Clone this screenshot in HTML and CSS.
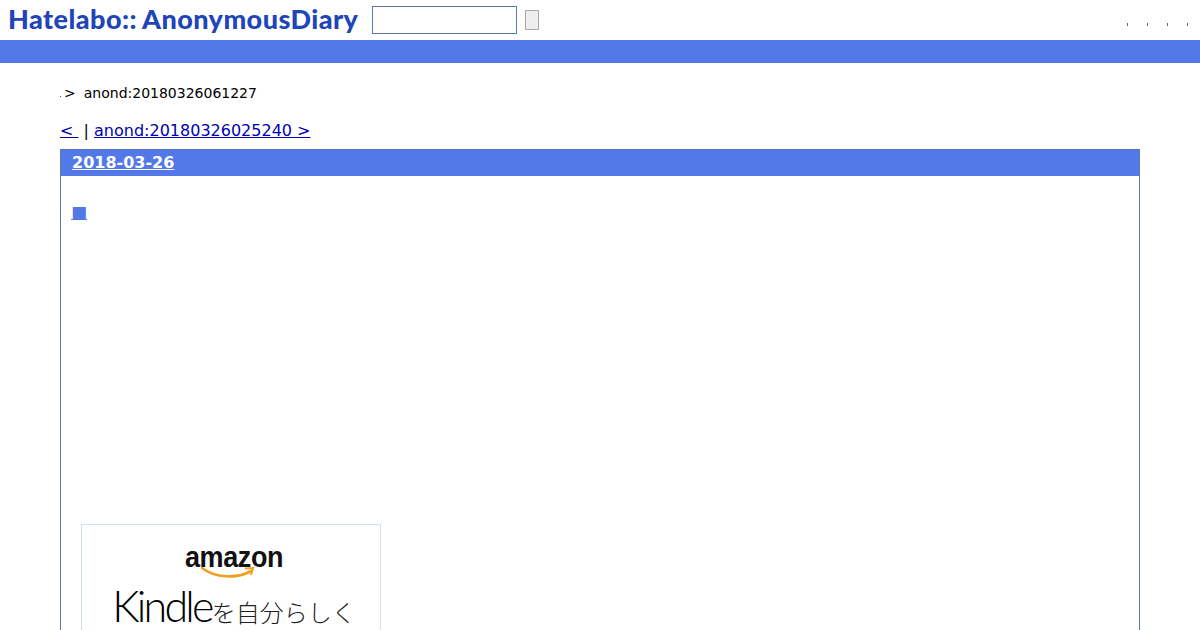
FILE: index.html
```html
<!DOCTYPE html>
<html lang="en">
<head>
    <meta charset="UTF-8">
    <meta name="viewport" content="width=device-width, initial-scale=1.0">
    <title>anond:20180326061227</title>
    <link rel="stylesheet" href="styles.css">
</head>
<body>
    <div class="header">
        <a class="logo" href="#">Hatelabo::<span class="logo-name">AnonymousDiary</span></a>
        <form class="search">
            <input class="search-input" type="text">
            <button class="search-button" type="button"></button>
        </form>
        <div class="header-links">
            <span class="dot"></span>
            <span class="dot"></span>
            <span class="dot"></span>
            <span class="dot"></span>
        </div>
    </div>
    <div class="band"></div>

    <div class="breadcrumb">
        <span class="crumb-dot"></span>
        <span class="crumb-arrow">&gt;</span>
        <span>anond:20180326061227</span>
    </div>

    <div class="pager">
        <a href="#">&lt;&nbsp;</a> | <a href="#">anond:20180326025240 &gt;</a>
    </div>

    <div class="day">
        <h2 class="day-title"><a href="#">2018-03-26</a></h2>
        <div class="day-body">
            <h3 class="entry-title"><a href="#">■</a></h3>
            <div class="banner">
                <div class="banner-brand">amazon</div>
                <svg class="banner-smile" width="54" height="13" viewBox="0 0 54 13">
                    <path d="M1 2C14 12 36 13 50 5" fill="none" stroke="#f0a01e" stroke-width="2.6" stroke-linecap="round"/>
                    <path d="M44 2.5L52 2L50 9" fill="none" stroke="#f0a01e" stroke-width="2"/>
                </svg>
                <div class="banner-copy"><span class="banner-kindle">Kindle</span>を自分らしく</div>
            </div>
        </div>
    </div>
</body>
</html>
```

FILE: styles.css
```css
body {
    font-family: "DejaVu Sans", sans-serif;
    background-color: #fff;
    color: #000;
    margin: 0;
    padding: 0;
    height: 630px;
    overflow: hidden;
}
a {
    color: #0000b0;
}
.header {
    display: flex;
    align-items: flex-start;
    height: 40px;
    padding-left: 8px;
}
.logo {
    width: 350px;
    font-family: Lato, sans-serif;
    font-weight: 900;
    font-size: 27px;
    line-height: 38px;
    letter-spacing: 0.45px;
    color: #2045b8;
    text-decoration: none;
    white-space: nowrap;
}
.logo-name {
    margin-left: 5px;
}
.search {
    display: flex;
    align-items: center;
    height: 40px;
    margin-left: 14px;
}
.search-input {
    width: 145px;
    height: 28px;
    padding: 0;
    border: 1px solid #5f7ba5;
    box-sizing: border-box;
    background-color: #fff;
}
.search-button {
    width: 14px;
    height: 20px;
    margin-left: 8px;
    padding: 0;
    border: 1px solid #aaa;
    background-color: #eee;
}
.header-links {
    display: flex;
    gap: 19px;
    margin-left: auto;
    padding-right: 12px;
    padding-top: 23px;
}
.dot {
    width: 1px;
    height: 3px;
    background-color: #666;
}
.band {
    height: 23px;
    background-color: #5279e7;
}
.breadcrumb {
    display: flex;
    align-items: center;
    height: 20px;
    margin: 20px 60px 0;
    font-size: 14px;
}
.crumb-dot {
    width: 1px;
    height: 1px;
    margin-top: 7px;
    background-color: #555;
}
.crumb-arrow {
    margin-left: 3px;
    margin-right: 8px;
}
.pager {
    height: 20px;
    margin: 18px 60px 0;
    font-size: 16px;
    line-height: 20px;
}
.day {
    margin: 8px 60px 0;
    border: 1px solid #5a76b8;
    border-bottom: none;
}
.day-title {
    margin: 0;
    padding-left: 11px;
    height: 26px;
    background-color: #5279e7;
    font-size: 16px;
    line-height: 26px;
}
.day-title a {
    color: #fff;
}
.day-body {
    padding: 0 20px;
}
.entry-title {
    margin: 25px 0 0 -10px;
    height: 323px;
    font-size: 17px;
    font-weight: normal;
    line-height: 22px;
}
.entry-title a {
    color: #5279e7;
}
.banner {
    display: flex;
    flex-direction: column;
    align-items: center;
    width: 298px;
    height: 250px;
    border: 1px solid #cfe0e8;
    padding-top: 19px;
}
.banner-brand {
    margin-left: 6px;
    font-family: "Liberation Sans", sans-serif;
    font-weight: 700;
    font-size: 27px;
    line-height: 26px;
    letter-spacing: -0.4px;
    transform: scaleY(1.08);
    color: #111;
}
.banner-smile {
    margin-left: -6px;
    margin-top: -4px;
}
.banner-copy {
    margin-left: 6px;
    margin-top: 7px;
    font-family: "Noto Sans CJK JP", sans-serif;
    font-weight: 300;
    font-size: 24px;
    line-height: 40px;
    color: #222;
    white-space: nowrap;
}
.banner-kindle {
    font-family: Lato, sans-serif;
    font-weight: 300;
    font-size: 43px;
    letter-spacing: -2.8px;
    color: #000;
}
```
